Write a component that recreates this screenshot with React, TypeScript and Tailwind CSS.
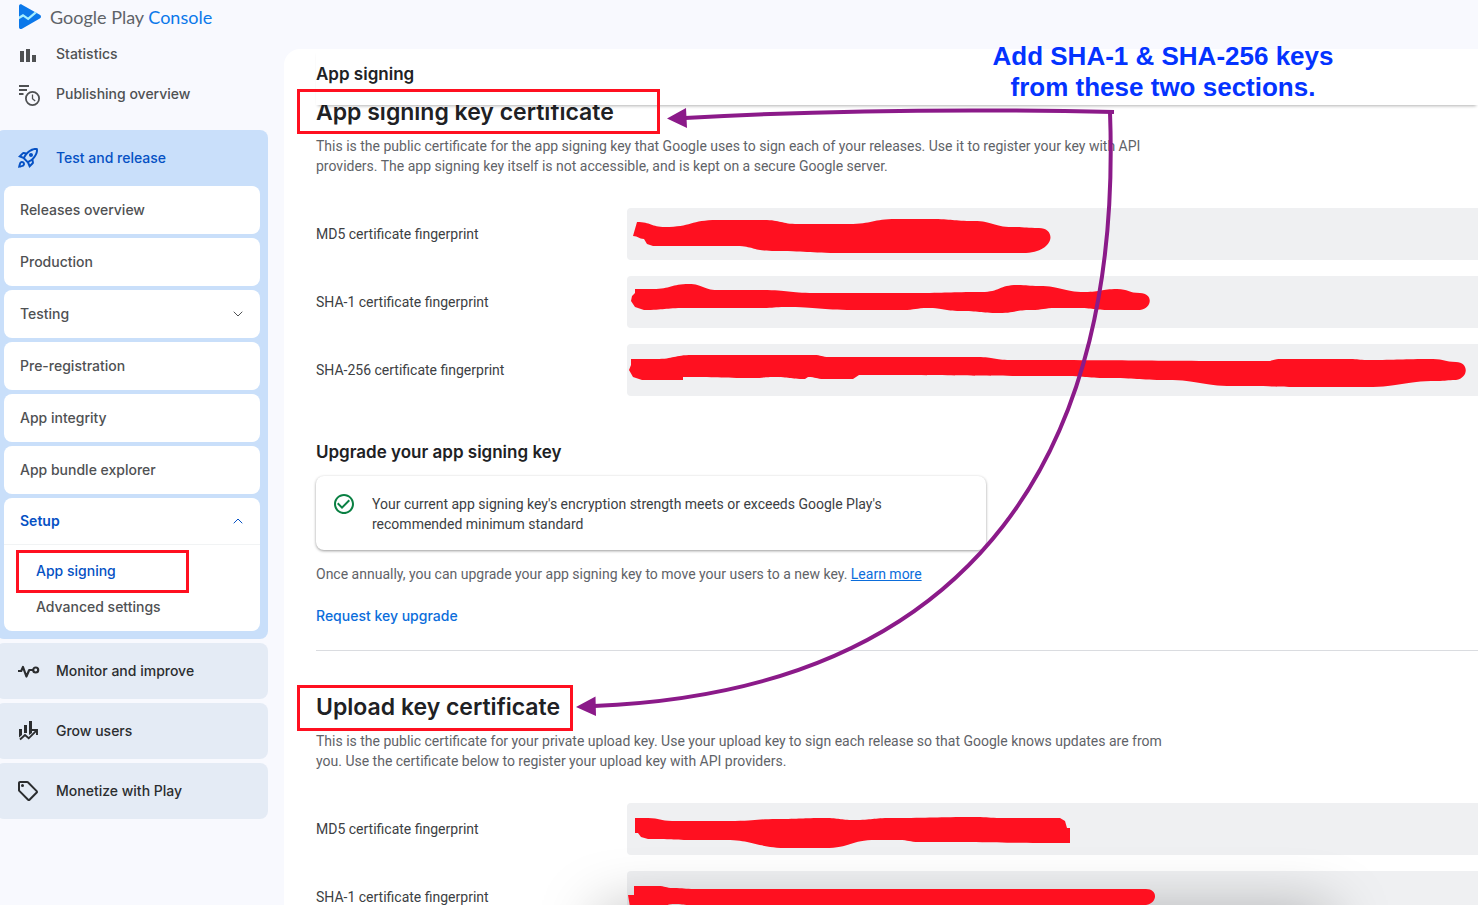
import type { ReactNode } from 'react';
import { ChevronDown, ChevronUp } from 'lucide-react';
import { MdCheckCircleOutline, MdOutlineRocketLaunch, MdOutlineSell } from 'react-icons/md';

type Point = [number, number];

interface Scribble {
  top: Point[];
  bottom: Point[];
  cap?: number;
}

interface Fingerprint {
  label: string;
  scribble: Scribble;
}

const signingKeys: Fingerprint[] = [
  {
    label: 'MD5 certificate fingerprint',
    scribble: {
      top: [[10, 14], [38, 19], [90, 12], [137, 12], [171, 16], [222, 16], [269, 11], [304, 11], [347, 13], [385, 19], [412, 20]],
      bottom: [[399, 45], [215, 45], [145, 43], [108, 38], [26, 38], [20, 36], [17, 31], [6, 28]],
      cap: 17,
    },
  },
  {
    label: 'SHA-1 certificate fingerprint',
    scribble: {
      top: [[8, 13], [26, 13], [62, 8], [90, 14], [136, 14], [187, 17], [287, 17], [355, 16], [390, 9], [412, 10], [458, 16], [490, 13], [513, 17]],
      bottom: [[513, 34], [483, 34], [450, 32], [429, 32], [404, 34], [372, 37], [333, 35], [301, 32], [276, 34], [226, 34], [158, 31], [136, 32], [58, 32], [17, 34], [8, 31], [4, 25], [5, 20], [8, 17]],
      cap: 13,
    },
  },
  {
    label: 'SHA-256 certificate fingerprint',
    scribble: {
      top: [[4, 15], [29, 15], [65, 11], [187, 11], [202, 13], [351, 13], [383, 16], [640, 17], [653, 15], [723, 15], [740, 16], [806, 15], [829, 18]],
      bottom: [[829, 36], [810, 37], [740, 43], [690, 43], [606, 42], [540, 36], [480, 34], [436, 32], [232, 31], [226, 35], [197, 35], [181, 33], [178, 35], [147, 33], [126, 34], [56, 33], [56, 36], [15, 36], [6, 33], [2, 26], [4, 21]],
      cap: 13,
    },
  },
];

const uploadKeys: Fingerprint[] = [
  {
    label: 'MD5 certificate fingerprint',
    scribble: {
      top: [[8, 15], [21, 15], [45, 18], [108, 18], [150, 16], [198, 15], [227, 17], [264, 15], [349, 14], [374, 15], [433, 15], [438, 18], [440, 25], [443, 25]],
      bottom: [[443, 40], [292, 39], [272, 37], [249, 37], [198, 45], [162, 45], [96, 37], [68, 37], [21, 36], [14, 34], [11, 30], [8, 30]],
    },
  },
  {
    label: 'SHA-1 certificate fingerprint',
    scribble: {
      top: [[7, 15], [31, 15], [46, 17], [68, 18], [519, 18]],
      bottom: [[519, 34], [62, 34], [48, 33], [30, 36], [3, 36], [1, 24], [7, 24]],
      cap: 12,
    },
  },
];

const releaseItems = ['Releases overview', 'Production', 'Testing', 'Pre-registration', 'App integrity', 'App bundle explorer'];

function trace(points: Point[]) {
  let d = '';
  for (let i = 1; i < points.length; i++) {
    const [x0, y0] = points[i - 1];
    const [x1, y1] = points[i];
    const mid = (x0 + x1) / 2;
    d += Math.abs(x1 - x0) < 10 ? `L${x1} ${y1}` : `C${mid} ${y0} ${mid} ${y1} ${x1} ${y1}`;
  }
  return d;
}

function scribblePath({ top, bottom, cap }: Scribble) {
  const [sx, sy] = top[0];
  const [ax, ay] = top[top.length - 1];
  const [bx, by] = bottom[0];
  const end = cap ? `C${ax + cap} ${ay} ${Math.max(ax, bx) + cap} ${by - 2} ${bx} ${by}` : `L${bx} ${by}`;
  return `M${sx} ${sy}${trace(top)}${end}${trace(bottom)}Z`;
}

function PlayConsoleLogo() {
  return (
    <svg width="24" height="26" viewBox="0 0 24 26" aria-hidden="true">
      <path d="M1 2.2C1 .6 2.6-.1 4 .7l17.8 10c1.6.9 1.6 3 0 3.900L4 24.700c-1.400.8-3 .1-3-1.500z" fill="#0b78ea" />
      <path d="M1 12.500l4-2.500 5 3.400 6.800-5.600 2 1.200-8.600 7.200-5-3.500L1 15.300z" fill="#a5efff" />
    </svg>
  );
}

function StatisticsIcon() {
  return (
    <svg width="24" height="24" viewBox="0 0 24 24" fill="currentColor" aria-hidden="true">
      <path d="M4 9h4v11H4zM10 7h4v13h-4zM16 13h4v7h-4z" />
    </svg>
  );
}

function PublishingIcon() {
  return (
    <svg width="24" height="24" viewBox="0 0 24 24" fill="none" stroke="currentColor" strokeWidth="1.800" aria-hidden="true">
      <path d="M3 4h10M3 8h8M3 12h4.500" />
      <circle cx="16.500" cy="16.500" r="6.600" />
      <path d="M16.500 12.500v4.300l2.700 2.200" strokeWidth="1.300" />
    </svg>
  );
}

function MonitorIcon() {
  return (
    <svg width="24" height="24" viewBox="0 0 24 24" fill="none" stroke="currentColor" strokeWidth="2.200" strokeLinejoin="round" aria-hidden="true">
      <path d="M2 12h3.200l1.800-4 3.400 9.500 2.800-6.500H17" />
      <circle cx="19.700" cy="11" r="2.500" />
    </svg>
  );
}

function GrowIcon() {
  return (
    <svg width="24" height="24" viewBox="0 0 24 24" aria-hidden="true">
      <path d="M3 10h3v6l-3 2.500zM8 6h3v8H8zM13 2h3v12l-3 2z" fill="currentColor" />
      <path d="M4 20.500L9 16l3.700 3.300 7.500-7.500M16 11h5v5" fill="none" stroke="currentColor" strokeWidth="1.900" />
    </svg>
  );
}

function SectionLink({ icon, label }: { icon: ReactNode; label: string }) {
  return (
    <a href="#" className="-ml-1 flex h-14 items-center gap-4 rounded-lg bg-[#e4ebf5] pl-5 text-[#2b2d2f]">
      {icon}
      {label}
    </a>
  );
}

function Sidebar() {
  return (
    <aside className="w-[268px] shrink-0 font-['Inter',sans-serif] text-sm leading-5 font-medium text-[#4f5153]">
      <a href="#" className="flex h-[34px] items-center gap-2 pl-[18px] font-['Lato',sans-serif] text-lg font-normal text-[#5f6368]">
        <PlayConsoleLogo />
        <span>
          Google Play <span className="text-[#0b78ea]">Console</span>
        </span>
      </a>
      <nav>
        <a href="#" className="flex h-10 items-center gap-4 pl-4">
          <StatisticsIcon />
          Statistics
        </a>
        <a href="#" className="flex h-10 items-center gap-4 pl-4">
          <PublishingIcon />
          Publishing overview
        </a>
        <div className="mt-4 -ml-1 rounded-lg bg-[#c9dffa] pr-2 pb-2 pl-2">
          <a href="#" className="flex h-14 items-center gap-4 pl-3 text-[#0551c4]">
            <MdOutlineRocketLaunch size={24} />
            Test and release
          </a>
          <div className="flex flex-col gap-1">
            {releaseItems.map((item) => (
              <a key={item} href="#" className="flex h-12 items-center justify-between rounded-lg bg-white px-4">
                {item}
                {item === 'Testing' && <ChevronDown size={16} strokeWidth={1.5} className="-mr-0.5" />}
              </a>
            ))}
            <div className="rounded-lg bg-white pb-1.5">
              <button type="button" className="flex h-[47px] w-full items-center justify-between border-b border-[#f1f3f4] px-4 font-semibold text-[#0551c4]">
                Setup
                <ChevronUp size={16} strokeWidth={1.5} className="-mr-0.5" />
              </button>
              <div className="pt-2">
                <a href="#" className="relative flex h-9 items-center pl-8 text-[#0551c4]">
                  App signing
                  <span className="absolute -top-[3px] left-3 h-[43px] w-[173px] border-3 border-[#ff1020]" />
                </a>
                <a href="#" className="flex h-9 items-center pl-8">
                  Advanced settings
                </a>
              </div>
            </div>
          </div>
        </div>
        <div className="mt-1 flex flex-col gap-1">
          <SectionLink icon={<MonitorIcon />} label="Monitor and improve" />
          <SectionLink icon={<GrowIcon />} label="Grow users" />
          <SectionLink icon={<MdOutlineSell size={24} />} label="Monetize with Play" />
        </div>
      </nav>
    </aside>
  );
}

function FingerprintList({ items }: { items: Fingerprint[] }) {
  return (
    <dl className="mt-8 flex flex-col gap-4">
      {items.map(({ label, scribble }) => (
        <div key={label} className="grid grid-cols-[311px_1fr] items-center text-[#3c4043]">
          <dt>{label}</dt>
          <dd className="relative h-[52px] rounded-l bg-[#eff0f2]">
            <svg className="absolute top-0 left-0 z-20" width="851" height="52" viewBox="0 0 851 52" role="img" aria-label="Hidden value">
              <path d={scribblePath(scribble)} fill="#ff1020" />
            </svg>
          </dd>
        </div>
      ))}
    </dl>
  );
}

function Annotations() {
  return (
    <div className="pointer-events-none absolute inset-0 z-30">
      <div className="absolute top-[89px] left-[297px] h-[45px] w-[363px] border-3 border-[#ff1020]" />
      <div className="absolute top-[685px] left-[297px] h-[46px] w-[276px] border-3 border-[#ff1020]" />
      <svg className="absolute top-0 left-0" width="1200" height="800" viewBox="0 0 1200 800" fill="none" aria-hidden="true">
        <path d="M1114 112Q880 107 685 118" stroke="#8b1a89" strokeWidth="4" />
        <path d="M1110 112C1122 440 985 690 594 706" stroke="#8b1a89" strokeWidth="4" />
        <path d="M667 118.500L686 108l1 20zM576 707l19.500-10.500.5 19.500z" fill="#8b1a89" />
      </svg>
      <p className="absolute top-[41px] left-[963px] w-[400px] text-center font-['Liberation_Sans',sans-serif] text-[26px] leading-[31px] font-bold text-[#0433ff]">
        Add SHA-1 &amp; SHA-256 keys
        <br />
        from these two sections.
      </p>
    </div>
  );
}

export default function App() {
  return (
    <div className="relative flex h-screen overflow-hidden bg-[#f8f9fe] font-['Roboto',sans-serif] text-sm leading-5 text-[#5f6368]">
      <Sidebar />
      <main className="mt-[49px] ml-4 min-w-0 flex-1 rounded-tl-2xl bg-white pl-8">
        <header className="relative z-10 flex h-14 items-center bg-white pb-1.5 shadow-[0_3px_3px_-2px_rgba(0,0,0,0.3)]">
          <h1 className="font-['Inter',sans-serif] text-[17px] font-semibold text-[#202124]">App signing</h1>
        </header>

        <section className="-mt-[9px]">
          <h2 className="font-['Inter',sans-serif] text-[23px] leading-8 font-semibold text-[#202124]">App signing key certificate</h2>
          <p className="mt-2">
            This is the public certificate for the app signing key that Google uses to sign each of your releases. Use it to register your key with API
            <br />
            providers. The app signing key itself is not accessible, and is kept on a secure Google server.
          </p>
          <FingerprintList items={signingKeys} />

          <h3 className="mt-11 font-['Inter',sans-serif] text-[17px] leading-6 font-semibold text-[#202124]">Upgrade your app signing key</h3>
          <div className="mt-3 flex max-w-[670px] gap-4 rounded-lg bg-white px-4 pt-4 pb-4 text-[#3c4043] shadow-[0_1px_3px_rgba(0,0,0,0.4)]">
            <MdCheckCircleOutline size={24} className="shrink-0 text-[#0a8043]" />
            <p className="pt-0.5">
              Your current app signing key's encryption strength meets or exceeds Google Play's
              <br />
              recommended minimum standard
            </p>
          </div>
          <p className="mt-3.5">
            Once annually, you can upgrade your app signing key to move your users to a new key.{' '}
            <a href="#" className="text-[#0b6ddb] underline">
              Learn more
            </a>
          </p>
          <button type="button" className="mt-[22px] block font-['Inter',sans-serif] font-medium text-[#0b6ddb]">
            Request key upgrade
          </button>
        </section>

        <section className="mt-6 border-t border-[#dadce0] pt-10">
          <h2 className="font-['Inter',sans-serif] text-[23px] leading-8 font-semibold text-[#202124]">Upload key certificate</h2>
          <p className="mt-2">
            This is the public certificate for your private upload key. Use your upload key to sign each release so that Google knows updates are from
            <br />
            you. Use the certificate below to register your upload key with API providers.
          </p>
          <FingerprintList items={uploadKeys} />
        </section>
      </main>
      {/* shadow cast by the bar docked below the window */}
      <div className="absolute top-full left-[600px] z-10 mt-2 h-10 w-[730px] shadow-[0_0_60px_rgba(0,0,0,0.35)]" />
      <Annotations />
    </div>
  );
}
